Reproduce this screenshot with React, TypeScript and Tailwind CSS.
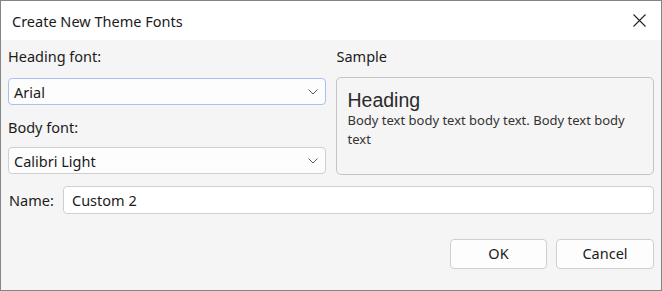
import React from "react";

const Chevron = () => (
  <svg width="10" height="6" viewBox="0 0 10 6" fill="none" className="shrink-0">
    <path d="M0.5 0.5 L5 5 L9.5 0.5" stroke="#5a5a5a" strokeWidth="1" />
  </svg>
);

export default function App() {
  const ui = { fontFamily: '"Noto Sans", "Open Sans", sans-serif' };
  return (
    <div
      className="w-[662px] h-[291px] border border-[#858585] bg-[#f5f5f5] flex flex-col text-[#1b1b1b] overflow-hidden"
      style={ui}
    >
      <div className="h-[39px] bg-white flex items-center justify-between pl-[11px] pr-[15px] shrink-0">
        <span className="text-[14.5px] leading-[20px]">Create New Theme Fonts</span>
        <svg width="13" height="13" viewBox="0 0 13 13" fill="none">
          <path d="M0.5 0.5 L12.5 12.5 M12.5 0.5 L0.5 12.5" stroke="#222" strokeWidth="1.1" />
        </svg>
      </div>
      <div className="flex-1 flex flex-col px-[7px]">
        <div className="flex gap-[10px] mt-[6px]">
          <div className="w-[318px] flex flex-col">
            <div className="h-[20px] text-[14.5px] leading-[20px]">Heading font:</div>
            <div className="mt-[12px] h-[27px] rounded-[4px] border border-[#a7c1f0] bg-[#fdfdfd] flex items-center justify-between pl-[5px] pr-[7px]">
              <span className="text-[14.5px] leading-[20px]">Arial</span>
              <Chevron />
            </div>
            <div className="h-[20px] text-[14.5px] leading-[20px] mt-[12px]">Body font:</div>
            <div className="mt-[10px] h-[27px] rounded-[4px] border border-[#cfcfcf] bg-[#fdfdfd] flex items-center justify-between pl-[5px] pr-[7px]">
              <span className="text-[14.5px] leading-[20px]">Calibri Light</span>
              <Chevron />
            </div>
          </div>
          <div className="w-[319px] flex flex-col">
            <div className="h-[20px] text-[14.5px] leading-[20px] ml-[1px]">Sample</div>
            <div className="mt-[11px] h-[98px] rounded-[5px] border border-[#c4c4c4] bg-[#f5f5f5] pl-[11px] pr-[10px] pt-[11px]">
              <div
                className="text-[19.5px] leading-[22px] text-[#2a2a2a]"
                style={{ fontFamily: '"Liberation Sans", Arial, sans-serif' }}
              >
                Heading
              </div>
              <div className="text-[13px] leading-[19px] text-[#333]">
                Body text body text body text. Body text body text
              </div>
            </div>
          </div>
        </div>
        <div className="flex items-center mt-[11px]">
          <span className="w-[55px] text-[14.5px] leading-[20px] pl-[1px]">Name:</span>
          <div className="flex-1 h-[28px] rounded-[4px] border border-[#cfcfcf] bg-white flex items-center pl-[8px]">
            <span className="text-[14.5px] leading-[20px]">Custom 2</span>
          </div>
        </div>
        <div className="flex justify-end gap-[9px] mt-[25px]">
          <div className="w-[97px] h-[30px] rounded-[4px] border border-[#cfcfcf] bg-[#fdfdfd] flex items-center justify-center text-[14.5px]">
            OK
          </div>
          <div className="w-[98px] h-[30px] rounded-[4px] border border-[#cfcfcf] bg-[#fdfdfd] flex items-center justify-center text-[14.5px]">
            Cancel
          </div>
        </div>
      </div>
    </div>
  );
}
